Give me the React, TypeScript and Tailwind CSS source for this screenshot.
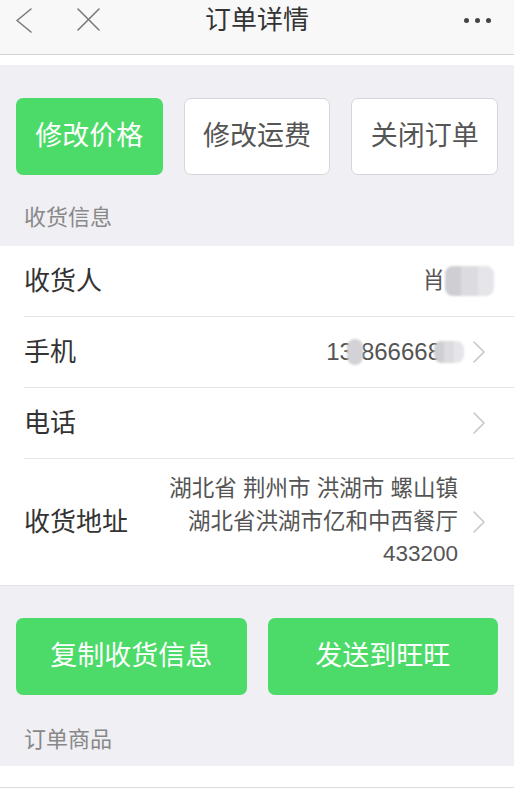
import React from "react";

const font = { fontFamily: '"Liberation Sans", "Noto Sans CJK SC", sans-serif' };

function Chevron() {
  return (
    <svg width="16" height="24" viewBox="0 0 16 24" className="shrink-0">
      <polyline points="3,2 13,12 3,22" fill="none" stroke="#c7c7cc" strokeWidth="1.6" strokeLinecap="round" strokeLinejoin="round" />
    </svg>
  );
}

function Blur({ w, h, cls }: { w: string; h: string; cls?: string }) {
  return (
    <span className={`inline-flex overflow-hidden rounded-[8px] blur-[1.2px] ${w} ${h} ${cls ?? ""}`}>
      <span className="flex-1 bg-[#cfcfd3]" />
      <span className="flex-1 bg-[#dcdce0]" />
      <span className="flex-1 bg-[#e6e6ea]" />
    </span>
  );
}

export default function App() {
  return (
    <div className="w-[514px] h-[790px] overflow-hidden bg-white" style={font}>
      {/* Header */}
      <div className="h-[55px] bg-[#f8f8f8] border-b border-[#d4d4d4] flex items-start">
        <div className="w-[130px] h-[40px] flex items-center">
          <svg width="130" height="40" viewBox="0 0 130 40">
            <polyline points="31,9 17,20.5 31,32" fill="none" stroke="#7a7a7a" strokeWidth="1.6" strokeLinecap="round" strokeLinejoin="round" />
            <line x1="78" y1="9" x2="99" y2="30" stroke="#7a7a7a" strokeWidth="1.6" strokeLinecap="round" />
            <line x1="99" y1="9" x2="78" y2="30" stroke="#7a7a7a" strokeWidth="1.6" strokeLinecap="round" />
          </svg>
        </div>
        <div className="flex-1 h-[41px] flex items-center justify-center text-[26px] text-[#333]">订单详情</div>
        <div className="w-[130px] h-[40px] flex items-center justify-end pr-[23px] gap-[6px]">
          <span className="w-[5px] h-[5px] rounded-full bg-[#444]" />
          <span className="w-[5px] h-[5px] rounded-full bg-[#444]" />
          <span className="w-[5px] h-[5px] rounded-full bg-[#444]" />
        </div>
      </div>
      <div className="h-[10px] bg-white" />

      {/* Gray section 1 */}
      <div className="bg-[#efeff4] px-[16px] pt-[33px]">
        <div className="flex gap-[21px]">
          <div className="w-[147px] h-[77px] rounded-[7px] bg-[#4cdb68] text-white text-[27px] flex items-center justify-center">修改价格</div>
          <div className="w-[147px] h-[77px] rounded-[7px] bg-white border border-[#d6d6da] text-[#555] text-[27px] flex items-center justify-center">修改运费</div>
          <div className="w-[147px] h-[77px] rounded-[7px] bg-white border border-[#d6d6da] text-[#555] text-[27px] flex items-center justify-center">关闭订单</div>
        </div>
        <div className="h-[71px] pt-[28px] pl-[8px] text-[22px] leading-[30px] text-[#888]">收货信息</div>
      </div>

      {/* List */}
      <div className="bg-white pl-[24px] border-b border-[#e2e2e6]">
        <div className="h-[71px] flex items-center justify-between border-b border-[#e5e5e5] pr-[20px]">
          <span className="text-[26px] text-[#333]">收货人</span>
          <span className="flex items-center text-[22.5px] text-[#555]">
            肖<Blur w="w-[49px]" h="h-[30px]" />
          </span>
        </div>
        <div className="h-[71px] flex items-center justify-between border-b border-[#e5e5e5] pr-[27px]">
          <span className="text-[26px] text-[#333]">手机</span>
          <span className="flex items-center gap-[7px]">
            <span className="flex items-center text-[24px] text-[#555]">
              13
              <span className="inline-block w-[16px] h-[26px] rounded-full bg-[#d3d3d7] blur-[1.2px] -ml-[6px] -mr-[2px]" />
              866668
              <Blur w="w-[30px]" h="h-[22px]" cls="-ml-[7px]" />
            </span>
            <Chevron />
          </span>
        </div>
        <div className="h-[71px] flex items-center justify-between border-b border-[#e5e5e5] pr-[27px]">
          <span className="text-[26px] text-[#333]">电话</span>
          <Chevron />
        </div>
        <div className="h-[126px] flex items-center justify-between pr-[27px]">
          <span className="text-[26px] text-[#333]">收货地址</span>
          <span className="flex items-center gap-[13px]">
            <span className="flex flex-col items-end text-[22.5px] leading-[32.5px] text-[#555]">
              <span>湖北省 荆州市 洪湖市 螺山镇</span>
              <span>湖北省洪湖市亿和中西餐厅</span>
              <span>433200</span>
            </span>
            <Chevron />
          </span>
        </div>
      </div>

      {/* Gray section 2 */}
      <div className="bg-[#efeff4] px-[16px] pt-[32px]">
        <div className="flex gap-[21px]">
          <div className="flex-1 h-[77px] rounded-[7px] bg-[#4cdb68] text-white text-[27px] flex items-center justify-center">复制收货信息</div>
          <div className="flex-1 h-[77px] rounded-[7px] bg-[#4cdb68] text-white text-[27px] flex items-center justify-center">发送到旺旺</div>
        </div>
        <div className="h-[71px] pt-[30px] pl-[8px] text-[22px] leading-[30px] text-[#888]">订单商品</div>
      </div>
      <div className="h-[22px] bg-white border-b border-[#dcdcdc]" />
    </div>
  );
}
